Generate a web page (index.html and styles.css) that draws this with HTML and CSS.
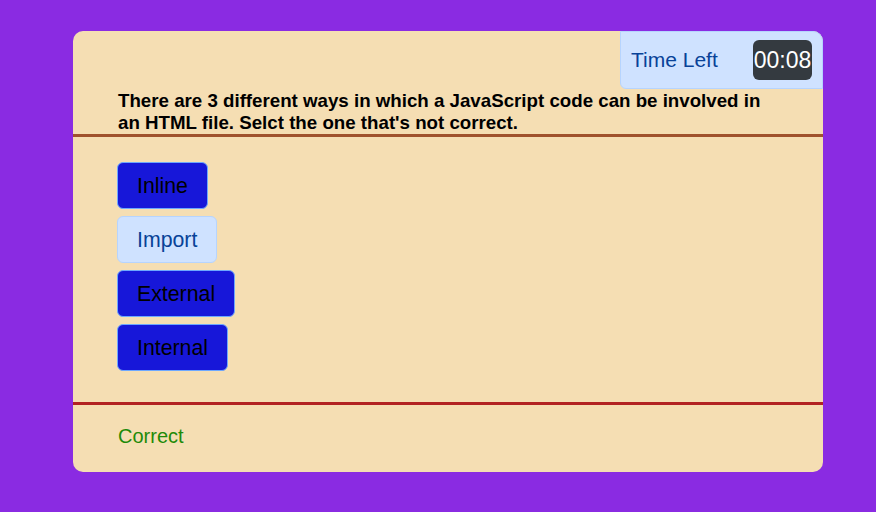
FILE: index.html
```html
<!DOCTYPE html>
<html>
<head>
<meta charset="utf-8">
<link rel="stylesheet" href="styles.css">
</head>
<body>
<div class="quiz">
  <div class="header">
    <div class="timer">
      <span class="timer-label">Time Left</span>
      <span class="timer-value">00:08</span>
    </div>
    <div class="question">There are 3 different ways in which a JavaScript code can be involved in an HTML file. Selct the one that's not correct.</div>
  </div>
  <div class="options">
    <button class="opt">Inline</button>
    <button class="opt selected">Import</button>
    <button class="opt">External</button>
    <button class="opt">Internal</button>
  </div>
  <div class="footer">
    <span class="result">Correct</span>
  </div>
</div>
</body>
</html>
```
FILE: styles.css
```css
html, body {
  margin: 0;
  padding: 0;
  background: #8a2be2;
  font-family: "Liberation Sans", Arial, sans-serif;
}
body {
  padding: 31px 0 0 73px;
  height: 512px;
  box-sizing: border-box;
}
.quiz {
  width: 750px;
  height: 441px;
  background: #f5deb3;
  border-radius: 10px;
  display: flex;
  flex-direction: column;
  box-sizing: border-box;
}
.header {
  display: flex;
  flex-direction: column;
  border-bottom: 3px solid #a0522d;
}
.timer {
  align-self: flex-end;
  width: 203px;
  height: 58px;
  box-sizing: border-box;
  background: #cfe2ff;
  border: 1px solid #b6d4fe;
  border-radius: 0 10px 0 6px;
  display: flex;
  align-items: center;
  justify-content: space-between;
  padding: 0 10px 0 10px;
}
.timer-label {
  color: #084298;
  font-size: 21px;
}
.timer-value {
  background: #343a40;
  color: #fff;
  font-size: 23px;
  width: 59px;
  height: 40px;
  border-radius: 6px;
  display: flex;
  align-items: center;
  justify-content: center;
}
.question {
  font-weight: bold;
  font-size: 18.72px;
  line-height: 22px;
  padding: 1px 55px 0 45px;
  color: #000;
}
.options {
  display: flex;
  flex-direction: column;
  align-items: flex-start;
  gap: 7px;
  padding: 25px 0 0 44px;
  height: 268px;
  box-sizing: border-box;
  border-bottom: 3px solid #b22222;
}
.opt {
  font-family: "Liberation Sans", Arial, sans-serif;
  font-size: 21.3px;
  height: 47px;
  padding: 2px 19px 0;
  background: #1717d9;
  color: #000;
  border: 1px solid #6ea8fe;
  border-radius: 6px;
  cursor: pointer;
}
.opt.selected {
  background: #cfe2ff;
  color: #084298;
  border-color: #b6d4fe;
}
.footer {
  flex: 1;
  display: flex;
  align-items: center;
  padding: 0 0 4px 45px;
}
.result {
  color: #1e8a08;
  font-size: 20px;
}
```
